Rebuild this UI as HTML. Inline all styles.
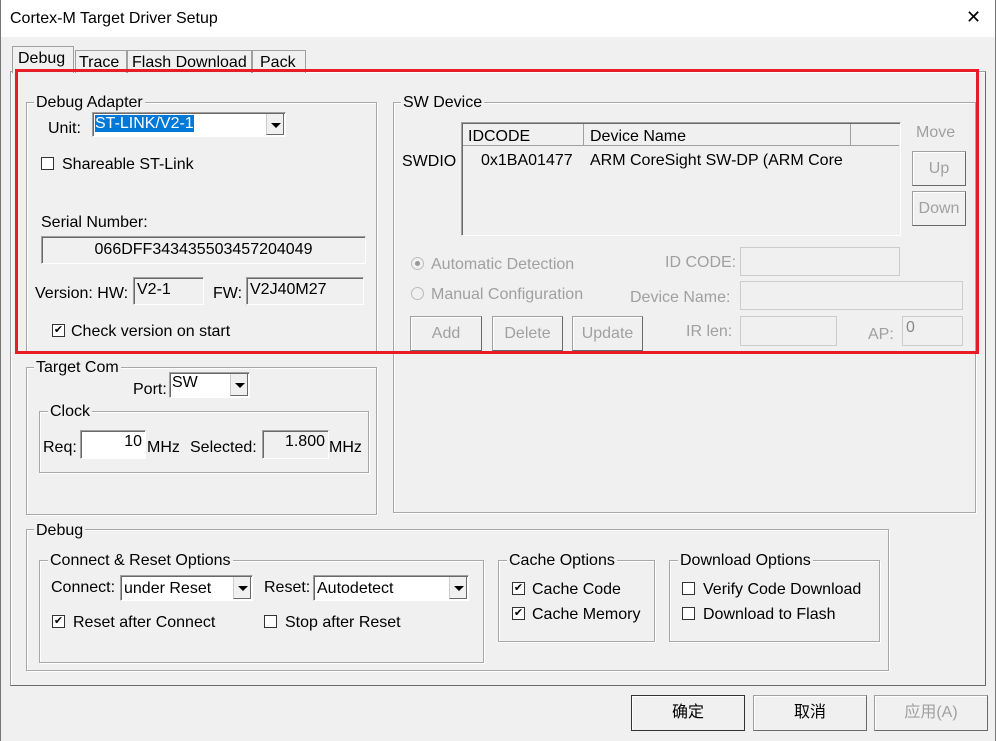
<!DOCTYPE html>
<html><head><meta charset="utf-8"><style>
*{box-sizing:border-box;margin:0;padding:0}
body{width:996px;height:741px;background:#f0f0f0;position:relative;overflow:hidden;font-family:"Liberation Sans","Noto Sans CJK SC",sans-serif;font-size:16px;color:#000}
.a{position:absolute;white-space:nowrap;line-height:19px;margin-top:1px}
.g{position:absolute;border:1px solid #a8a8a8;box-shadow:1px 1px 0 #fff inset,1px 1px 0 #fff}
.l{position:absolute;background:#f0f0f0;padding:0 2px;line-height:19px;white-space:nowrap;margin-top:1px}
.box{position:absolute;border:1px solid #a0a0a0;border-right-color:#fff;border-bottom-color:#fff;box-shadow:inset 1px 1px 0 #696969;background:#fff;padding:0 4px;line-height:24px;white-space:nowrap}
.ro{background:#f0f0f0}
.cb{position:absolute;width:13px;height:13px;border:1px solid #333;background:#fff;font-size:11px;line-height:11px;text-align:center}
.btn{position:absolute;border:1px solid #a0a0a0;border-right-color:#696969;border-bottom-color:#696969;box-shadow:inset 1px 1px 0 #fff;background:#f0f0f0;text-align:center;color:#a0a0a0}
.dd{position:absolute;right:1px;top:1px;bottom:1px;width:18px;background:#f0f0f0;border-left:1px solid #ccc;border-right:1px solid #696969;border-bottom:1px solid #696969}
.dd:after{content:"";position:absolute;left:4px;top:9px;border-left:5px solid transparent;border-right:5px solid transparent;border-top:5px solid #000}
.gr{color:#a0a0a0}
.tab{position:absolute;top:50px;height:23px;border:1px solid #a0a0a0;border-bottom:none;background:#f0f0f0;padding:0 4px;line-height:24px;white-space:nowrap;overflow:hidden}
</style></head><body>
<div style="position:absolute;left:0;top:0;width:996px;height:37px;background:#fff"></div>
<div class="a" style="left:10px;top:8px;font-size:16px">Cortex-M Target Driver Setup</div>
<div class="a" style="left:966px;top:7px;font-size:18px">✕</div>
<div style="position:absolute;left:0;top:0;width:1px;height:741px;background:#777"></div>
<div style="position:absolute;left:995px;top:0;width:1px;height:741px;background:#777"></div>
<div style="position:absolute;left:10px;top:71px;width:976px;height:615px;border:1px solid #a0a0a0;border-right-color:#696969;border-bottom-color:#696969;box-shadow:inset 1px 1px 0 #fff"></div>
<div class="tab" style="left:75px;width:52px;padding:0 3px">Trace</div>
<div class="tab" style="left:127px;width:125px;padding:0 4px">Flash Download</div>
<div class="tab" style="left:252px;width:54px;padding:0 7px">Pack</div>
<div class="tab" style="left:12px;top:46px;height:27px;width:62px;z-index:2;padding:0 5px">Debug</div>
<div class="g" style="left:26px;top:102px;width:351px;height:251px"></div>
<div class="l" style="left:34px;top:92px">Debug Adapter</div>
<div class="a" style="left:48px;top:118px">Unit:</div>
<div class="box" style="left:92px;top:112px;width:194px;height:25px;padding:0 2px;line-height:22px"><span style="background:#0078d7;color:#fff">ST-LINK/V2-1</span><div class="dd"></div></div>
<div class="cb" style="left:41px;top:157px"></div><div class="a" style="left:62px;top:154px">Shareable ST-Link</div>
<div class="a" style="left:41px;top:212px">Serial Number:</div>
<div class="box ro" style="left:41px;top:236px;width:325px;height:28px;text-align:center;line-height:26px">066DFF343435503457204049</div>
<div class="a" style="left:35px;top:283px">Version: HW:</div>
<div class="box ro" style="left:133px;top:277px;width:71px;height:28px;padding:0 3px">V2-1</div>
<div class="a" style="left:213px;top:283px">FW:</div>
<div class="box ro" style="left:246px;top:277px;width:118px;height:28px;padding:0 3px">V2J40M27</div>
<div class="cb" style="left:52px;top:324px">✔</div><div class="a" style="left:71px;top:321px">Check version on start</div>
<div class="g" style="left:393px;top:102px;width:583px;height:411px"></div>
<div class="l" style="left:401px;top:92px">SW Device</div>
<div class="a" style="left:402px;top:151px">SWDIO</div>
<div style="position:absolute;left:461px;top:122px;width:440px;height:114px;border:1px solid #a0a0a0;border-right-color:#fff;border-bottom-color:#fff;box-shadow:inset 1px 1px 0 #696969;background:#f0f0f0"></div>
<div style="position:absolute;left:463px;top:124px;width:436px;height:22px;border-bottom:1px solid #a0a0a0"></div>
<div style="position:absolute;left:583px;top:124px;width:1px;height:22px;background:#a0a0a0"></div>
<div style="position:absolute;left:850px;top:124px;width:1px;height:22px;background:#a0a0a0"></div>
<div class="a" style="left:468px;top:126px">IDCODE</div>
<div class="a" style="left:590px;top:126px">Device Name</div>
<div class="a" style="left:481px;top:150px">0x1BA01477</div>
<div class="a" style="left:590px;top:150px">ARM CoreSight SW-DP (ARM Core</div>
<div class="a gr" style="left:916px;top:122px">Move</div>
<div class="btn" style="left:912px;top:151px;width:54px;height:35px;line-height:33px">Up</div>
<div class="btn" style="left:912px;top:191px;width:54px;height:35px;line-height:33px">Down</div>
<div class="cb" style="left:411px;top:257px;border-radius:50%;border-color:#bbb;background:#f0f0f0"><div style="width:5px;height:5px;border-radius:50%;background:#999;margin:3px"></div></div>
<div class="a gr" style="left:431px;top:254px">Automatic Detection</div>
<div class="cb" style="left:411px;top:287px;border-radius:50%;border-color:#bbb;background:#f0f0f0"></div>
<div class="a gr" style="left:431px;top:284px">Manual Configuration</div>
<div class="a gr" style="left:665px;top:252px">ID CODE:</div>
<div class="box ro" style="left:740px;top:247px;width:160px;height:29px;box-shadow:none;border-color:#ccc"></div>
<div class="a gr" style="left:630px;top:287px">Device Name:</div>
<div class="box ro" style="left:740px;top:281px;width:223px;height:29px;box-shadow:none;border-color:#ccc"></div>
<div class="btn" style="left:410px;top:316px;width:72px;height:35px;line-height:33px">Add</div>
<div class="btn" style="left:492px;top:316px;width:71px;height:35px;line-height:33px">Delete</div>
<div class="btn" style="left:572px;top:316px;width:71px;height:35px;line-height:33px">Update</div>
<div class="a gr" style="left:686px;top:321px">IR len:</div>
<div class="box ro" style="left:740px;top:316px;width:97px;height:30px;box-shadow:none;border-color:#ccc"></div>
<div class="a gr" style="left:868px;top:324px">AP:</div>
<div class="box ro" style="left:902px;top:316px;width:61px;height:30px;box-shadow:none;border-color:#ccc;color:#888;padding:0 3px;line-height:22px">0</div>
<div style="position:absolute;left:15px;top:69px;width:964px;height:285px;border:3px solid #e81c24;z-index:5"></div>
<div class="g" style="left:26px;top:367px;width:351px;height:148px"></div>
<div class="l" style="left:34px;top:357px">Target Com</div>
<div class="a" style="left:133px;top:379px">Port:</div>
<div class="box" style="left:169px;top:372px;width:81px;height:26px;padding:0 2px;line-height:20px">SW<div class="dd"></div></div>
<div class="g" style="left:39px;top:411px;width:330px;height:62px"></div>
<div class="l" style="left:48px;top:401px">Clock</div>
<div class="a" style="left:43px;top:437px">Req:</div>
<div class="box" style="left:80px;top:430px;width:66px;height:29px;text-align:right;line-height:22px;padding:0 3px">10</div>
<div class="a" style="left:147px;top:437px">MHz</div>
<div class="a" style="left:190px;top:437px">Selected:</div>
<div class="box ro" style="left:262px;top:430px;width:67px;height:29px;text-align:right;line-height:22px;padding:0 3px">1.800</div>
<div class="a" style="left:329px;top:437px">MHz</div>
<div class="g" style="left:26px;top:529px;width:863px;height:142px"></div>
<div class="l" style="left:34px;top:520px">Debug</div>
<div class="g" style="left:39px;top:560px;width:445px;height:103px"></div>
<div class="l" style="left:48px;top:550px">Connect &amp; Reset Options</div>
<div class="a" style="left:51px;top:577px">Connect:</div>
<div class="box" style="left:120px;top:575px;width:133px;height:26px;padding:0 3px;line-height:26px">under Reset<div class="dd"></div></div>
<div class="a" style="left:264px;top:577px">Reset:</div>
<div class="box" style="left:313px;top:575px;width:156px;height:26px;padding:0 3px;line-height:26px">Autodetect<div class="dd"></div></div>
<div class="cb" style="left:52px;top:615px">✔</div><div class="a" style="left:73px;top:612px">Reset after Connect</div>
<div class="cb" style="left:264px;top:615px"></div><div class="a" style="left:285px;top:612px">Stop after Reset</div>
<div class="g" style="left:498px;top:560px;width:157px;height:82px"></div>
<div class="l" style="left:507px;top:550px">Cache Options</div>
<div class="cb" style="left:512px;top:582px">✔</div><div class="a" style="left:532px;top:579px">Cache Code</div>
<div class="cb" style="left:512px;top:607px">✔</div><div class="a" style="left:532px;top:604px">Cache Memory</div>
<div class="g" style="left:669px;top:560px;width:211px;height:82px"></div>
<div class="l" style="left:678px;top:550px">Download Options</div>
<div class="cb" style="left:682px;top:582px"></div><div class="a" style="left:703px;top:579px">Verify Code Download</div>
<div class="cb" style="left:682px;top:607px"></div><div class="a" style="left:703px;top:604px">Download to Flash</div>
<div class="btn" style="left:631px;top:695px;width:114px;height:36px;line-height:34px;color:#000;border:1px solid #333">确定</div>
<div class="btn" style="left:753px;top:695px;width:114px;height:36px;line-height:34px;color:#000">取消</div>
<div class="btn" style="left:874px;top:695px;width:114px;height:36px;line-height:34px">应用(A)</div>
</body></html>
